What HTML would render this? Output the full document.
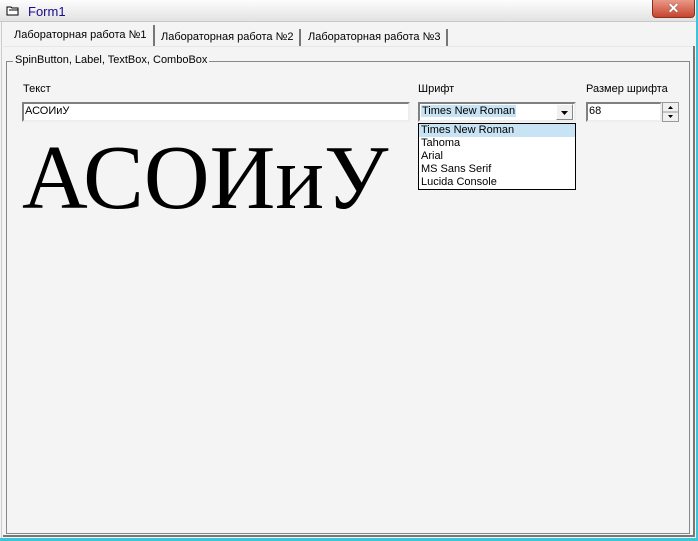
<!DOCTYPE html>
<html><head><meta charset="utf-8"><style>
*{margin:0;padding:0;box-sizing:border-box}
body{width:698px;height:541px;overflow:hidden;background:#f4f4f4;font-family:"Liberation Sans",sans-serif;font-size:11px;position:relative}
.a{position:absolute}
</style></head><body>
<div class="a" style="left:0;top:0;width:698px;height:22px;background:linear-gradient(#fdfdfd,#e2e2e2);border-bottom:1px solid #c8c8c8"></div>
<svg class="a" style="left:6px;top:5px" width="14" height="12"><path d="M1 2h4l1 1h6v7H1z" fill="#fff" stroke="#000"/><path d="M3 5h9" stroke="#000"/></svg>
<div class="a" style="left:28px;top:4px;font-size:13px;color:#1a0a8c">Form1</div>
<div class="a" style="left:652px;top:0;width:43px;height:18px;background:linear-gradient(#e89a88,#c8452e);border:1px solid #8a3020;border-top:none;border-radius:0 0 4px 4px;color:#fff;font-weight:bold;font-size:14px;text-align:center;line-height:17px;text-shadow:0 0 1px #333">✕</div>
<div class="a" style="left:696px;top:0;width:2px;height:541px;background:#3cc4d8"></div>
<div class="a" style="left:0;top:538px;width:698px;height:3px;background:#3cc4d8"></div>
<!-- tabs -->
<div class="a" style="left:8px;top:25px;width:147px;height:22px;background:#f4f4f4;border-right:2px solid #777;padding:4px 0 0 6px">Лабораторная работа №1</div>
<div class="a" style="left:157px;top:29px;width:144px;height:17px;border-right:2px solid #777;padding:2px 0 0 4px">Лабораторная работа №2</div>
<div class="a" style="left:303px;top:29px;width:145px;height:17px;border-right:2px solid #777;padding:2px 0 0 5px">Лабораторная работа №3</div>
<div class="a" style="left:3px;top:46px;width:691px;height:1px;background:#e8e8e0"></div>
<div class="a" style="left:693px;top:46px;width:2px;height:490px;background:#777"></div>
<div class="a" style="left:3px;top:535px;width:692px;height:2px;background:#777"></div>
<div class="a" style="left:1px;top:22px;width:1px;height:516px;background:#ccc"></div>
<!-- group -->
<div class="a" style="left:6px;top:61px;width:684px;height:473px;border:1px solid #888"></div>
<div class="a" style="left:13px;top:54px;background:#f4f4f4;padding:0 2px">SpinButton, Label, TextBox, ComboBox</div>
<div class="a" style="left:23px;top:83px">Текст</div>
<div class="a" style="left:22px;top:102px;width:388px;height:20px;background:#fff;border:2px solid #808080;border-right-color:#eee;border-bottom-color:#eee;padding:1px 1px;font-size:11px">АСОИиУ</div>
<div class="a" style="left:22px;top:128px;font-family:'Liberation Serif',serif;font-size:91px;line-height:100px;white-space:nowrap">АСОИиУ</div>
<div class="a" style="left:418px;top:83px">Шрифт</div>
<div class="a" style="left:418px;top:102px;width:158px;height:20px;background:#fff;border:2px solid #808080;border-right-color:#eee;border-bottom-color:#eee"></div>
<div class="a" style="left:421px;top:105px;background:#c8e4f4;padding:0 1px;font-size:11px">Times New Roman</div>
<div class="a" style="left:556px;top:104px;width:17px;height:16px;background:#f0f0f0;border:1px solid #888;border-top-color:#fff;border-left-color:#fff"><svg width="15" height="14"><path d="M4 6h7l-3.5 4z" fill="#000"/></svg></div>
<div class="a" style="left:418px;top:123px;width:158px;height:67px;background:#fff;border:1px solid #000;font-size:11px;line-height:13px">
<div style="background:#c8e4f4;padding-left:2px">Times New Roman</div>
<div style="padding-left:2px">Tahoma</div>
<div style="padding-left:2px">Arial</div>
<div style="padding-left:2px">MS Sans Serif</div>
<div style="padding-left:2px">Lucida Console</div></div>
<div class="a" style="left:586px;top:83px">Размер шрифта</div>
<div class="a" style="left:586px;top:102px;width:76px;height:20px;background:#fff;border:2px solid #808080;border-right-color:#eee;border-bottom-color:#eee;padding:1px 1px">68</div>
<div class="a" style="left:662px;top:102px;width:17px;height:20px;border:1px solid #999;background:#f0f0f0"><svg width="15" height="18"><path d="M5 6h5l-2.5-3zM5 12h5l-2.5 3z" fill="#000"/><path d="M0 9h15" stroke="#999"/></svg></div>
</body></html>
